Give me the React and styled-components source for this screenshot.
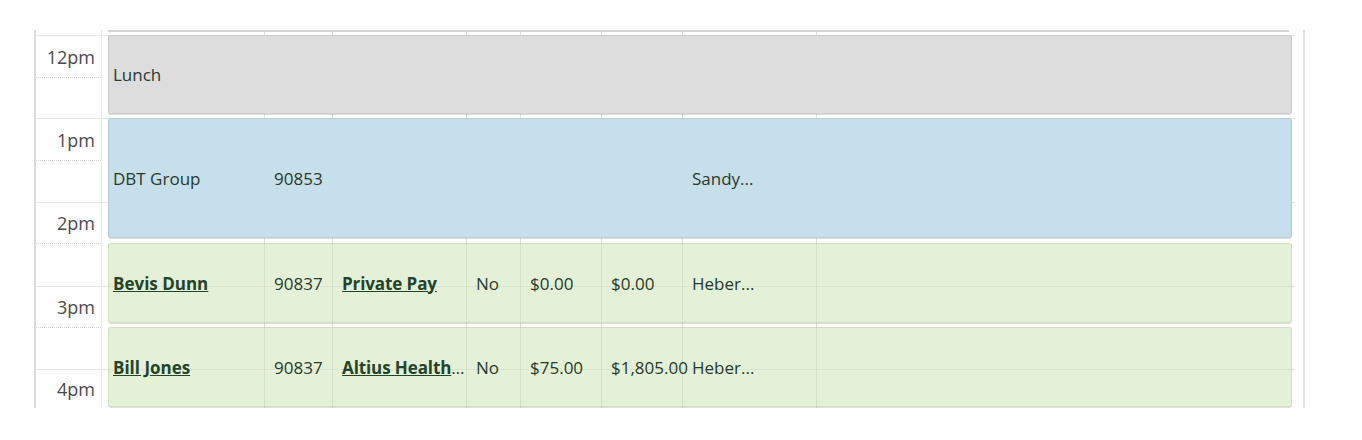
import styled, { createGlobalStyle } from "styled-components";

const GlobalStyle = createGlobalStyle`
  body {
    margin: 0;
    background: #fff;
    font-family: "Open Sans", "Liberation Sans", sans-serif;
  }
`;

// column widths of an event row, first one is inside the 1px event border
const COLS = [155, 68, 134, 54, 81, 81, 134];
const LINE = "#dedede";

const colEdges = COLS.reduce(
  (acc, w) => [...acc, acc[acc.length - 1] + w],
  [7]
).slice(1);
const hourLines = [5, 88, 172, 256, 339];

const gridBackground = [
  ...colEdges.map(() => `linear-gradient(${LINE}, ${LINE})`),
  ...hourLines.map(() => `linear-gradient(#e6e6e6, #e6e6e6)`),
].join(", ");
const gridPositions = [
  ...colEdges.map((x) => `${x}px 0`),
  ...hourLines.map((y) => `0 ${y}px`),
].join(", ");
const gridSizes = [
  ...colEdges.map(() => "1px 100%"),
  ...hourLines.map(() => "100% 1px"),
].join(", ");

const slots = [
  { h: 6, label: "", dotted: false },
  { h: 42, label: "12pm", dotted: true },
  { h: 41, label: "", dotted: false },
  { h: 42, label: "1pm", dotted: true },
  { h: 42, label: "", dotted: false },
  { h: 41, label: "2pm", dotted: true },
  { h: 43, label: "", dotted: false },
  { h: 41, label: "3pm", dotted: true },
  { h: 42, label: "", dotted: false },
  { h: 0, label: "4pm", last: true },
];

const events = [
  { tone: "grey", h: 79, gap: 4, cells: ["Lunch"] },
  {
    tone: "blue",
    h: 120,
    gap: 5,
    cells: ["DBT Group", "90853", "", "", "", "", "Sandy..."],
  },
  {
    tone: "green",
    h: 80,
    gap: 4,
    links: [0, 2],
    cells: ["Bevis Dunn", "90837", "Private Pay", "No", "$0.00", "$0.00", "Heber..."],
  },
  {
    tone: "green",
    h: 80,
    gap: 0,
    links: [0, 2],
    cells: ["Bill Jones", "90837", "Altius Health Plans", "No", "$75.00", "$1,805.00", "Heber..."],
  },
];

const App = () => (
  <>
    <GlobalStyle />
    <Frame>
      <TimeColumn>
        {slots.map((s, i) => (
          <Slot key={i} $h={s.h} $dotted={s.dotted} $last={s.last}>
            {s.label}
          </Slot>
        ))}
      </TimeColumn>
      <EventArea>
        <PrevTail />
        {events.map((ev, i) => (
          <Event key={i} $tone={ev.tone} $h={ev.h} $gap={ev.gap}>
            {ev.cells.map((c, j) => (
              <Cell key={j} $clip={j === 2}>
                {ev.links && ev.links.includes(j) ? <Link>{c}</Link> : c}
              </Cell>
            ))}
            <Cell />
          </Event>
        ))}
      </EventArea>
      <Gutter />
    </Frame>
  </>
);

const Frame = styled.div`
  margin: 30px 0 0 34px;
  width: 1271px;
  height: 378px;
  box-sizing: border-box;
  display: grid;
  grid-template-columns: 66px 1193px 8px;
  border-left: 2px solid #dcdcdc;
  border-right: 2px solid #e2e2e2;
`;

const TimeColumn = styled.div`
  display: flex;
  flex-direction: column;
  border-right: 1px solid #ececec;
  overflow: hidden;
`;

const Slot = styled.div`
  box-sizing: border-box;
  flex: ${(p) => (p.$last ? "1" : `0 0 ${p.$h}px`)};
  display: flex;
  align-items: center;
  justify-content: flex-end;
  padding-right: 6px;
  font-size: 18px;
  color: #4a4a4a;
  border-bottom: ${(p) =>
    p.$last ? "none" : p.$dotted ? "1px dotted #d6d6d6" : "1px solid #e6e6e6"};
`;

const EventArea = styled.div`
  padding: 0 3px 0 6px;
  background-color: #fff;
  background-image: ${gridBackground};
  background-position: ${gridPositions};
  background-size: ${gridSizes};
  background-repeat: no-repeat;
  overflow: hidden;
`;

const PrevTail = styled.div`
  height: 2px;
  margin: 0 3px 3px 0;
  background: #d5d5d5;
`;

const tones = {
  grey: "#dddddd",
  blue: "#c7dfea",
  green: "rgba(203, 227, 175, 0.5)",
};

const Event = styled.div`
  box-sizing: border-box;
  height: ${(p) => p.$h}px;
  margin-bottom: ${(p) => p.$gap}px;
  display: grid;
  grid-template-columns: ${COLS.map((w) => `${w}px`).join(" ")} 1fr;
  align-items: center;
  background: ${(p) => tones[p.$tone]};
  border: 1px solid rgba(0, 0, 0, 0.08);
  border-radius: 3px;
  box-shadow: 0 1px 0 rgba(0, 0, 0, 0.12);
  color: #27392d;
  font-size: 17px;
`;

const Cell = styled.div`
  padding: 0 ${(p) => (p.$clip ? "0" : "2px")} 0 10px;
  white-space: nowrap;
  min-width: 0;
  overflow: ${(p) => (p.$clip ? "hidden" : "visible")};
  text-overflow: ellipsis;
  letter-spacing: ${(p) => (p.$clip ? "-0.1px" : "0")};
  &:first-child {
    padding-left: 4px;
  }
`;

const Link = styled.a`
  color: #23432b;
  font-weight: 700;
  text-decoration: underline;
  cursor: pointer;
`;

const Gutter = styled.div``;

export default App;
